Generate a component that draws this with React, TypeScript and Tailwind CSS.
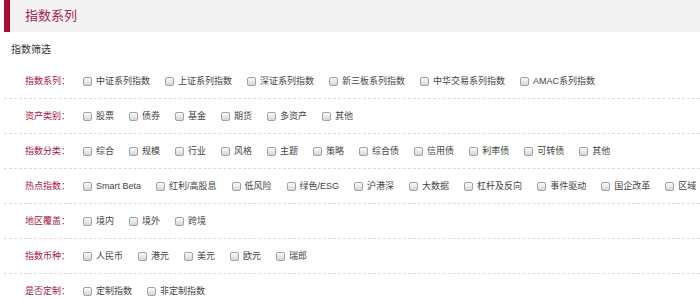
const groups: { label: string; items: string[] }[] = [
  { label: '指数系列：', items: ['中证系列指数', '上证系列指数', '深证系列指数', '新三板系列指数', '中华交易系列指数', 'AMAC系列指数'] },
  { label: '资产类别：', items: ['股票', '债券', '基金', '期货', '多资产', '其他'] },
  { label: '指数分类：', items: ['综合', '规模', '行业', '风格', '主题', '策略', '综合债', '信用债', '利率债', '可转债', '其他'] },
  {
    label: '热点指数：',
    items: ['Smart Beta', '红利/高股息', '低风险', '绿色/ESG', '沪港深', '大数据', '杠杆及反向', '事件驱动', '国企改革', '区域'],
  },
  { label: '地区覆盖：', items: ['境内', '境外', '跨境'] },
  { label: '指数币种：', items: ['人民币', '港元', '美元', '欧元', '瑞郎'] },
  { label: '是否定制：', items: ['定制指数', '非定制指数'] },
]

function Check({ text }: { text: string }) {
  return (
    <label className="flex shrink-0 items-center mr-[15px] cursor-pointer">
      <span className="w-[9px] h-[9px] shrink-0 rounded-[2px] border border-[#a2a2a2] bg-linear-to-b from-[#fbfbfb] to-[#d6d6d6]" />
      <span className="ml-[4px] whitespace-nowrap text-[9px] leading-[12px] text-[#444]">{text}</span>
    </label>
  )
}

export default function App() {
  return (
    <div className="w-[700px] h-[300px] overflow-hidden bg-white pl-[4px] font-['Liberation_Sans','Noto_Sans_CJK_SC',sans-serif]">
      <div className="h-[32px] flex items-center border-l-[6px] border-[#a30d36] bg-[#f3f3f3] pl-[15px]">
        <h1 className="text-[13px] leading-[16px] text-[#a9234b]">指数系列</h1>
      </div>

      <div className="h-[32px] pt-[4px] pl-[7px] flex items-center text-[10px] leading-[14px] text-[#333]">
        指数筛选
      </div>

      <div>
        {groups.map((g) => (
          <div key={g.label} className="h-[35px] flex items-center pl-[21px] border-b border-dashed border-[#dcdcdc]">
            <span className="w-[58px] shrink-0 whitespace-nowrap text-[9px] leading-[12px] text-[#a8153f]">{g.label}</span>
            <div className="flex items-center">
              {g.items.map((it) => (
                <Check key={it} text={it} />
              ))}
            </div>
          </div>
        ))}
      </div>
    </div>
  )
}
